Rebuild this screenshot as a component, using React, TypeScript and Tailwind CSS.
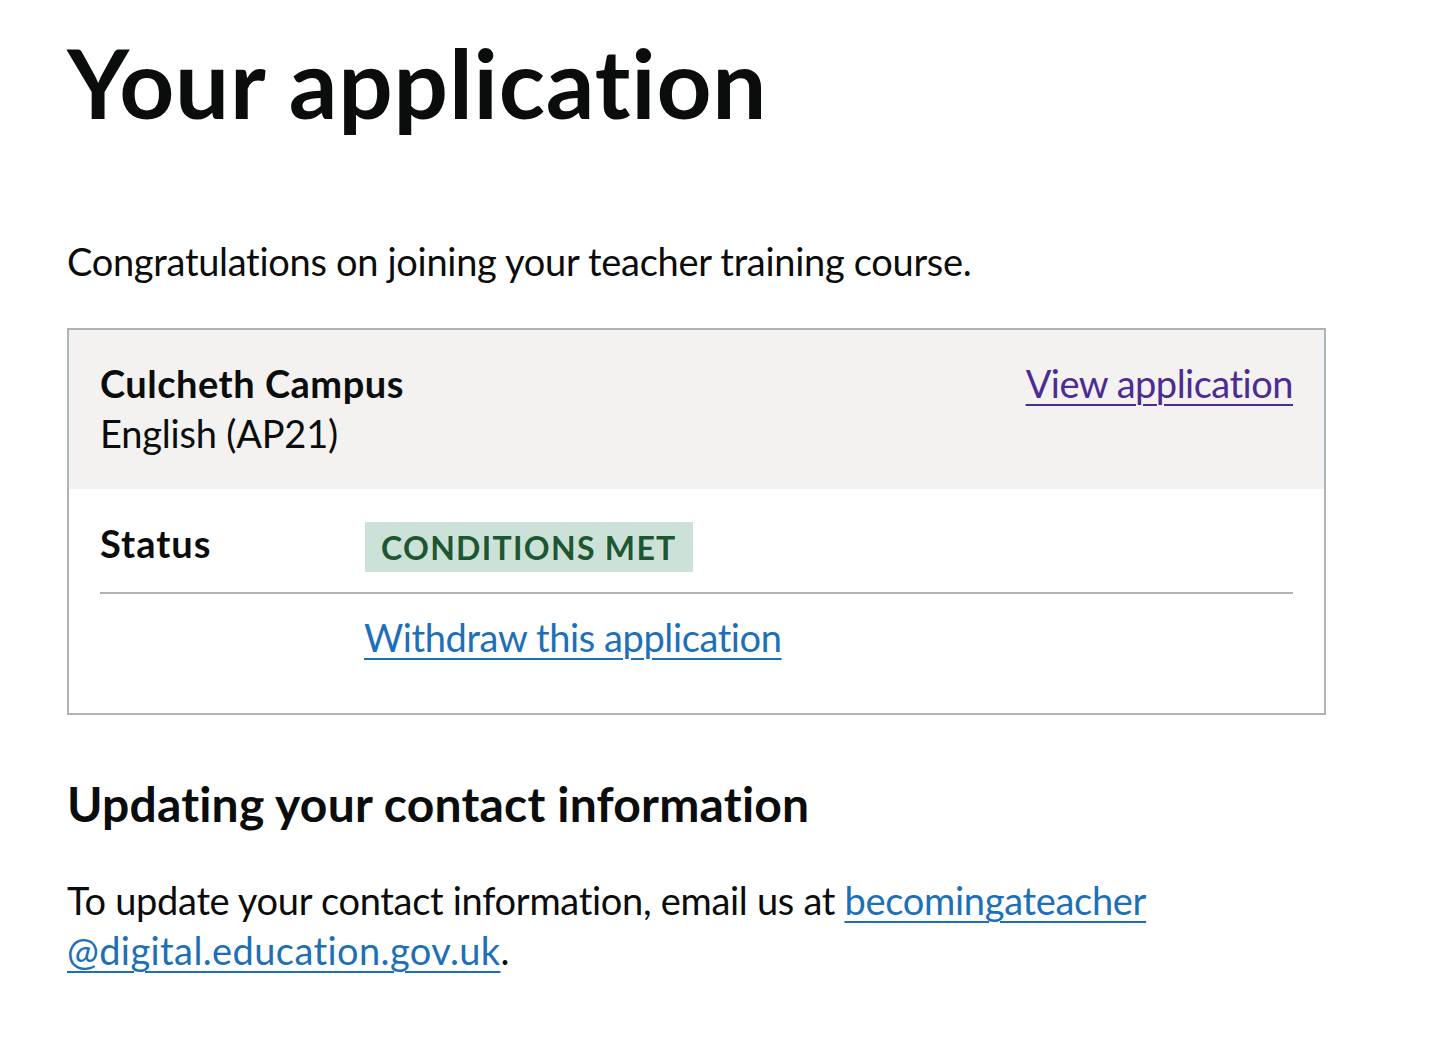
import React from "react";

const font = { fontFamily: "Lato, 'Noto Sans', Arial, sans-serif" };

export default function App() {
  return (
    <div className="min-h-[1050px] w-[1450px] bg-white text-[#0b0c0c]" style={font}>
      <div className="pl-[67px] pr-[124px] pt-[32px]">
        <h1 className="text-[96px] leading-[100px] font-bold tracking-[0.8px]">Your application</h1>
        <p className="mt-[104px] text-[38px] leading-[50px] tracking-[-0.3px]">
          Congratulations on joining your teacher training course.
        </p>
        <div className="mt-[42px] border-2 border-[#b1b4b6]">
          <div className="flex items-start justify-between bg-[#f3f2f1] px-[31px] pt-[28px] pb-[31px]">
            <div className="text-[38px] leading-[50px]">
              <div className="font-bold tracking-[0.5px]">Culcheth Campus</div>
              <div className="tracking-[-0.2px]">English (AP21)</div>
            </div>
            <a
              href="#"
              className="text-[38px] leading-[50px] tracking-[-0.5px] text-[#4c2c92] underline decoration-[2px] underline-offset-[6px]"
            >
              View application
            </a>
          </div>
          <div className="px-[31px] pt-[29px] pb-[51px]">
            <div className="flex items-start border-b-2 border-[#b1b4b6] pb-[20px]">
              <div className="w-[265px] shrink-0 text-[38px] leading-[50px] font-bold tracking-[1px]">Status</div>
              <div className="pt-[4px]">
                <span className="inline-block bg-[#cce2d8] px-[16px] pt-[10px] pb-[8px] text-[32px] leading-[32px] font-bold uppercase tracking-[1.3px] text-[#1e5631]">
                  Conditions met
                </span>
              </div>
            </div>
            <div className="flex pt-[18px]">
              <div className="w-[264px] shrink-0" />
              <a
                href="#"
                className="text-[38px] leading-[50px] tracking-[-0.4px] text-[#1d70b8] underline decoration-[2px] underline-offset-[6px]"
              >
                Withdraw this application
              </a>
            </div>
          </div>
        </div>
        <h2 className="mt-[59px] text-[48px] leading-[60px] font-bold tracking-[0.2px]">
          Updating your contact information
        </h2>
        <p className="mt-[41px] text-[38px] leading-[50px] tracking-[-0.3px]">
          To update your contact information, email us at{" "}
          <a href="#" className="text-[#1d70b8] underline decoration-[2px] underline-offset-[6px]">
            becomingateacher
            <br />
            <span className="tracking-[0.4px]">@digital.education.gov.uk</span>
          </a>
          .
        </p>
      </div>
    </div>
  );
}
